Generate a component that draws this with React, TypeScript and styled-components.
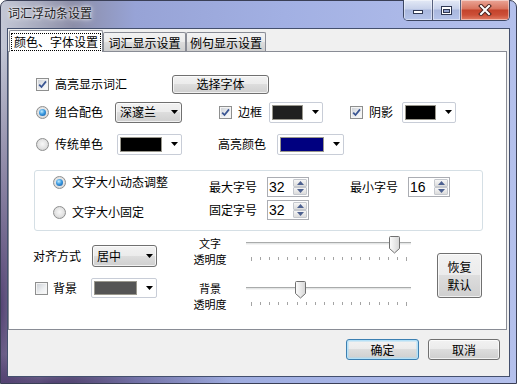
import React from 'react';
import styled, { createGlobalStyle, css } from 'styled-components';

const GlobalStyle = createGlobalStyle`
  html,
  body {
    margin: 0;
    padding: 0;
    background: #ffffff;
  }

  body {
    font-family: 'Noto Sans CJK SC', 'Noto Sans', sans-serif;
    font-size: 12px;
    color: #000000;
  }
`;

const buttonFace = css`
  background: linear-gradient(#f2f2f2 0%, #ebebeb 50%, #dddddd 50%, #cfcfcf 100%);
  border: 1px solid #707070;
  border-radius: 3px;
  box-shadow: inset 0 0 0 1px rgba(255, 255, 255, 0.7);
`;

const Window = styled.div`
  width: 517px;
  height: 384px;
  box-sizing: border-box;
  display: flex;
  flex-direction: column;
  padding: 0 6px 6px;
  border: 1px solid #3a3f56;
  border-radius: 7px 7px 0 0;
  background:
    radial-gradient(ellipse 40px 260px at 0% 80%, rgba(58, 36, 92, 0.8), rgba(58, 36, 92, 0)),
    radial-gradient(ellipse 180px 30px at 10% 100%, rgba(58, 36, 92, 0.75), rgba(58, 36, 92, 0)),
    linear-gradient(90deg, #c4c8d6 0%, #8c8ea8 14%, #97a3d6 26%, #a2b0e3 55%, #b4c0ec 100%);
`;

const TitleBar = styled.div`
  height: 27px;
  display: flex;
  align-items: flex-start;
`;

const Title = styled.span`
  padding: 4px 0 0 1px;
  line-height: 16px;
  color: #1c1c24;
  text-shadow: 0 0 6px #ffffff, 0 0 3px #ffffff;
`;

const CaptionGroup = styled.div`
  margin: -1px 0 0 auto;
  height: 20px;
  display: flex;
  border: 1px solid #3d4763;
  border-top: none;
  border-radius: 0 0 5px 5px;
  overflow: hidden;
`;

const CaptionButton = styled.div<{ $w: number; $close?: boolean }>`
  width: ${(p) => p.$w}px;
  display: flex;
  align-items: center;
  justify-content: center;
  border-left: 1px solid #56607c;
  background: ${(p) =>
    p.$close
      ? 'linear-gradient(#eba697 0%, #d8735d 45%, #c4432c 50%, #cc4f37 75%, #e27e66 100%)'
      : 'linear-gradient(#e3e9f6 0%, #c7d1ea 45%, #a9b7dd 50%, #b5c4ea 100%)'};
  box-shadow: inset 0 0 0 1px rgba(255, 255, 255, 0.45);

  &:first-child {
    border-left: none;
  }
`;

const Client = styled.div`
  flex: 1;
  display: flex;
  flex-direction: column;
  background: #f0f0f0;
  border: 1px solid #44506e;
`;

const TabStrip = styled.div`
  position: relative;
  z-index: 1;
  height: 22px;
  display: flex;
  align-items: flex-end;
  padding-left: 1px;
`;

const Tab = styled.div<{ $active?: boolean; $w: number }>`
  box-sizing: border-box;
  width: ${(p) => p.$w}px;
  height: ${(p) => (p.$active ? 22 : 19)}px;
  margin-bottom: ${(p) => (p.$active ? -1 : 0)}px;
  padding-top: ${(p) => (p.$active ? 0 : 2)}px;
  display: flex;
  align-items: center;
  justify-content: center;
  border: 1px solid #898c95;
  border-bottom: none;
  border-radius: 2px 2px 0 0;
  background: ${(p) =>
    p.$active ? '#ffffff' : 'linear-gradient(#f2f2f2 0%, #ebebeb 50%, #dddddd 50%, #cfcfcf 100%)'};
  white-space: nowrap;
  line-height: 14px;
`;

const FocusText = styled.span`
  padding: 1px 2px;
  border: 1px dotted #000000;
`;

const Panel = styled.div`
  box-sizing: border-box;
  height: 279px;
  margin-right: 2px;
  display: flex;
  flex-direction: column;
  background: #ffffff;
  border: 1px solid #898c95;
`;

const Row = styled.div<{ $top?: number; $left?: number; $h?: number }>`
  display: flex;
  align-items: center;
  height: ${(p) => p.$h ?? 22}px;
  margin-top: ${(p) => p.$top ?? 0}px;
  padding-left: ${(p) => p.$left ?? 0}px;
`;

const Cell = styled.div<{ $w: number; $gap?: number }>`
  flex: 0 0 ${(p) => p.$w}px;
  display: flex;
  align-items: center;
  gap: ${(p) => p.$gap ?? 6}px;
  white-space: nowrap;
`;

const Label = styled.span`
  line-height: 14px;
  white-space: nowrap;
`;

const CheckFrame = styled.span`
  box-sizing: border-box;
  flex: 0 0 13px;
  width: 13px;
  height: 13px;
  display: flex;
  align-items: center;
  justify-content: center;
  border: 1px solid #8e8f8f;
  background: linear-gradient(135deg, #c9cdd3 0%, #eef0f2 60%, #fbfbfb 100%);
  box-shadow: inset 0 0 0 1px #f4f4f4;
`;

const RadioFrame = styled.span<{ $on?: boolean }>`
  box-sizing: border-box;
  flex: 0 0 13px;
  width: 13px;
  height: 13px;
  display: flex;
  align-items: center;
  justify-content: center;
  border: 1px solid #8e8f8f;
  border-radius: 50%;
  background: radial-gradient(circle at 50% 45%, #f8f8f8 0%, #e2e2e2 55%, #c6c6c6 100%);

  &::after {
    content: '';
    display: ${(p) => (p.$on ? 'block' : 'none')};
    width: 7px;
    height: 7px;
    border-radius: 50%;
    background: radial-gradient(circle at 40% 35%, #c2ecff 0%, #3b9ae0 45%, #0b4f9c 100%);
  }
`;

const PushButton = styled.div<{ $w: number; $h: number; $default?: boolean }>`
  ${buttonFace};
  box-sizing: border-box;
  width: ${(p) => p.$w}px;
  height: ${(p) => p.$h}px;
  display: flex;
  align-items: center;
  justify-content: center;
  text-align: center;
  line-height: 17.5px;

  ${(p) =>
    p.$default &&
    css`
      border-color: #3c7fb1;
      box-shadow: inset 0 0 0 1px #b5e1f8, inset 0 0 0 2px rgba(170, 220, 245, 0.45);
    `}
`;

const DropList = styled.div<{ $w: number; $h: number }>`
  ${buttonFace};
  box-sizing: border-box;
  width: ${(p) => p.$w}px;
  height: ${(p) => p.$h}px;
  display: flex;
  align-items: center;
  justify-content: space-between;
  padding: 0 3px 0 4px;
  line-height: 14px;
`;

const ColorPick = styled.div<{ $w: number; $h: number }>`
  box-sizing: border-box;
  width: ${(p) => p.$w}px;
  height: ${(p) => p.$h}px;
  display: flex;
  padding: 2px 0 2px 2px;
  background: #ffffff;
  border: 1px solid #c8cdd7;
  border-radius: 2px;
`;

const Swatch = styled.span<{ $color: string }>`
  flex: 1;
  border: 1px solid #9a988e;
  background: ${(p) => p.$color};
`;

const PickArrow = styled.span`
  box-sizing: border-box;
  flex: 0 0 19px;
  display: flex;
  align-items: center;
  justify-content: flex-end;
  padding-right: 3px;
`;

const GroupBox = styled.div`
  box-sizing: border-box;
  width: 449px;
  height: 61px;
  margin: 15px 0 0 25px;
  display: flex;
  border: 1px solid #d5dfe5;
  border-radius: 3px;
`;

const RadioColumn = styled.div`
  box-sizing: border-box;
  width: 174px;
  padding: 3px 0 0 18px;
  display: flex;
  flex-direction: column;
  gap: 14px;
`;

const SpinGrid = styled.div`
  padding-top: 6px;
  display: grid;
  grid-template-columns: 58px 83px 58px 42px;
  grid-auto-rows: 20px;
  row-gap: 3px;
  align-items: center;
`;

const Spin = styled.div`
  box-sizing: border-box;
  width: 42px;
  height: 20px;
  display: flex;
  border: 1px solid #abadb3;
  background: #ffffff;
`;

const SpinValue = styled.span`
  flex: 1;
  padding-left: 1px;
  font: 14px/18px 'Liberation Sans', Arial, sans-serif;
`;

const SpinButtons = styled.div`
  box-sizing: border-box;
  width: 15px;
  display: flex;
  flex-direction: column;
  padding: 1px 1px 1px 0;
`;

const SpinButton = styled.span`
  flex: 1;
  display: flex;
  align-items: center;
  justify-content: center;
  border: 1px solid #c5c8ce;
  border-radius: 1px;
  background: linear-gradient(#f6f6f6, #dcdcdc);
`;

const BottomArea = styled.div`
  display: flex;
  margin-top: 2px;
  padding-left: 24px;
`;

const AlignColumn = styled.div`
  width: 124px;
  display: flex;
  flex-direction: column;
  padding-top: 12px;
  gap: 11px;
`;

const SliderColumn = styled.div`
  margin-left: 29px;
  padding-top: 2px;
  display: flex;
  flex-direction: column;
  gap: 15px;
`;

const SliderRow = styled.div`
  height: 30px;
  display: flex;
  gap: 12px;
`;

const SliderLabel = styled.div`
  width: 48px;
  text-align: center;
  font-size: 11px;
  line-height: 16px;
`;

const SliderBox = styled.div`
  position: relative;
  width: 165px;
  height: 30px;
`;

const Track = styled.div`
  position: absolute;
  left: 0;
  right: 0;
  top: 7px;
  height: 1px;
  background: #e4e6e6;
  border-top: 1px solid #a9abab;
  border-bottom: 1px solid #f4f4f4;
`;

const Ticks = styled.div`
  position: absolute;
  left: 5px;
  right: 4px;
  top: 22px;
  display: flex;
  justify-content: space-between;
  align-items: flex-start;
`;

const Tick = styled.span<{ $long?: boolean }>`
  width: 1px;
  height: ${(p) => (p.$long ? 4 : 3)}px;
  background: #a4a4a4;
`;

const Thumb = styled.svg`
  position: absolute;
  top: 1px;
`;

const RestoreColumn = styled.div`
  margin: 20px 0 0 26px;
`;

const Footer = styled.div`
  display: flex;
  justify-content: flex-end;
  gap: 9px;
  padding: 9px 9px 0 0;
`;

const DownArrow = () => (
  <svg width="7" height="4" viewBox="0 0 7 4">
    <polygon points="0,0 7,0 3.5,4" fill="#000000" />
  </svg>
);

const CheckBox = ({ checked }: { checked?: boolean }) => (
  <CheckFrame>
    {checked && (
      <svg width="9" height="9" viewBox="0 0 9 9">
        <path d="M1.2 4.6 L3.5 7 L8 1.4" fill="none" stroke="#3a5592" strokeWidth="1.8" />
      </svg>
    )}
  </CheckFrame>
);

const SpinArrow = ({ up }: { up?: boolean }) => (
  <svg width="7" height="4" viewBox="0 0 7 4">
    <polygon points={up ? '0,4 7,4 3.5,0' : '0,0 7,0 3.5,4'} fill="#4d6190" />
  </svg>
);

const SpinEdit = ({ value }: { value: number }) => (
  <Spin>
    <SpinValue>{value}</SpinValue>
    <SpinButtons>
      <SpinButton>
        <SpinArrow up />
      </SpinButton>
      <SpinButton>
        <SpinArrow />
      </SpinButton>
    </SpinButtons>
  </Spin>
);

const ColorCombo = ({ w, h, color }: { w: number; h: number; color: string }) => (
  <ColorPick $w={w} $h={h}>
    <Swatch $color={color} />
    <PickArrow>
      <DownArrow />
    </PickArrow>
  </ColorPick>
);

// 0..255, one tick every 15
const Slider = ({ value }: { value: number }) => {
  const center = 5 + (value / 255) * 155;
  return (
    <SliderBox>
      <Track />
      <Ticks>
        {Array.from({ length: 18 }).map((_, i) => (
          <Tick key={i} $long={i === 0 || i === 17} />
        ))}
      </Ticks>
      <Thumb width="11" height="18" viewBox="0 0 11 18" style={{ left: center - 5 }}>
        <defs>
          <linearGradient id={`thumb-${value}`} x1="0" y1="0" x2="1" y2="0">
            <stop offset="0" stopColor="#fdfdfd" />
            <stop offset="1" stopColor="#d6d6d6" />
          </linearGradient>
        </defs>
        <path
          d="M0.5 1.5 Q0.5 0.5 1.5 0.5 H9.5 Q10.5 0.5 10.5 1.5 V12.5 L5.5 17 L0.5 12.5 Z"
          fill={`url(#thumb-${value})`}
          stroke="#707070"
        />
      </Thumb>
    </SliderBox>
  );
};

const App: React.FC = () => {
  return (
    <>
      <GlobalStyle />
      <Window>
        <TitleBar>
          <Title>词汇浮动条设置</Title>
          <CaptionGroup>
            <CaptionButton $w={28}>
              <svg width="10" height="5" viewBox="0 0 10 5" style={{ marginTop: 5 }}>
                <rect x="0.5" y="0.5" width="9" height="3" fill="#ffffff" stroke="#2f3852" />
              </svg>
            </CaptionButton>
            <CaptionButton $w={27}>
              <svg width="11" height="9" viewBox="0 0 11 9">
                <rect x="0.5" y="0.5" width="10" height="8" fill="#ffffff" stroke="#2f3852" />
                <rect x="2.5" y="3.5" width="6" height="3" fill="#93a3cf" stroke="#2f3852" />
              </svg>
            </CaptionButton>
            <CaptionButton $w={48} $close>
              <svg width="14" height="12" viewBox="0 0 14 12">
                <path d="M3 2 L11 10 M11 2 L3 10" stroke="#4a2420" strokeWidth="4" strokeLinecap="square" />
                <path d="M3 2 L11 10 M11 2 L3 10" stroke="#ffffff" strokeWidth="2" strokeLinecap="square" />
              </svg>
            </CaptionButton>
          </CaptionGroup>
        </TitleBar>

        <Client>
          <TabStrip>
            <Tab $active $w={94}>
              <FocusText>颜色、字体设置</FocusText>
            </Tab>
            <Tab $w={83}>词汇显示设置</Tab>
            <Tab $w={80}>例句显示设置</Tab>
          </TabStrip>

          <Panel>
            <Row $top={21} $left={27}>
              <Cell $w={136}>
                <CheckBox checked />
                <Label>高亮显示词汇</Label>
              </Cell>
              <PushButton $w={97} $h={19}>
                选择字体
              </PushButton>
            </Row>

            <Row $top={6} $left={27}>
              <Cell $w={79}>
                <RadioFrame $on />
                <Label>组合配色</Label>
              </Cell>
              <Cell $w={104}>
                <DropList $w={67} $h={21}>
                  <Label>深邃兰</Label>
                  <DownArrow />
                </DropList>
              </Cell>
              <Cell $w={50}>
                <CheckBox checked />
                <Label>边框</Label>
              </Cell>
              <Cell $w={81}>
                <ColorCombo w={54} h={21} color="#202020" />
              </Cell>
              <Cell $w={52}>
                <CheckBox checked />
                <Label>阴影</Label>
              </Cell>
              <ColorCombo w={54} h={21} color="#000000" />
            </Row>

            <Row $top={10} $left={27}>
              <Cell $w={81}>
                <RadioFrame />
                <Label>传统单色</Label>
              </Cell>
              <Cell $w={101}>
                <ColorCombo w={65} h={21} color="#000000" />
              </Cell>
              <Cell $w={59}>
                <Label>高亮颜色</Label>
              </Cell>
              <ColorCombo w={67} h={21} color="#000080" />
            </Row>

            <GroupBox>
              <RadioColumn>
                <Row $h={16}>
                  <Cell $w={140}>
                    <RadioFrame $on />
                    <Label>文字大小动态调整</Label>
                  </Cell>
                </Row>
                <Row $h={16}>
                  <Cell $w={140}>
                    <RadioFrame />
                    <Label>文字大小固定</Label>
                  </Cell>
                </Row>
              </RadioColumn>
              <SpinGrid>
                <Label>最大字号</Label>
                <SpinEdit value={32} />
                <Label>最小字号</Label>
                <SpinEdit value={16} />
                <Label>固定字号</Label>
                <SpinEdit value={32} />
              </SpinGrid>
            </GroupBox>

            <BottomArea>
              <AlignColumn>
                <Row $h={22}>
                  <Cell $w={59}>
                    <Label>对齐方式</Label>
                  </Cell>
                  <DropList $w={65} $h={22}>
                    <Label>居中</Label>
                    <DownArrow />
                  </DropList>
                </Row>
                <Row $h={20} $left={2}>
                  <Cell $w={56} $gap={5}>
                    <CheckBox />
                    <Label>背景</Label>
                  </Cell>
                  <ColorCombo w={66} h={20} color="#555555" />
                </Row>
              </AlignColumn>

              <SliderColumn>
                <SliderRow>
                  <SliderLabel>
                    文字
                    <br />
                    透明度
                  </SliderLabel>
                  <Slider value={235} />
                </SliderRow>
                <SliderRow>
                  <SliderLabel>
                    背景
                    <br />
                    透明度
                  </SliderLabel>
                  <Slider value={80} />
                </SliderRow>
              </SliderColumn>

              <RestoreColumn>
                <PushButton $w={45} $h={45}>
                  恢复
                  <br />
                  默认
                </PushButton>
              </RestoreColumn>
            </BottomArea>
          </Panel>

          <Footer>
            <PushButton $w={73} $h={21} $default>
              确定
            </PushButton>
            <PushButton $w={72} $h={21}>
              取消
            </PushButton>
          </Footer>
        </Client>
      </Window>
    </>
  );
};

export default App;
